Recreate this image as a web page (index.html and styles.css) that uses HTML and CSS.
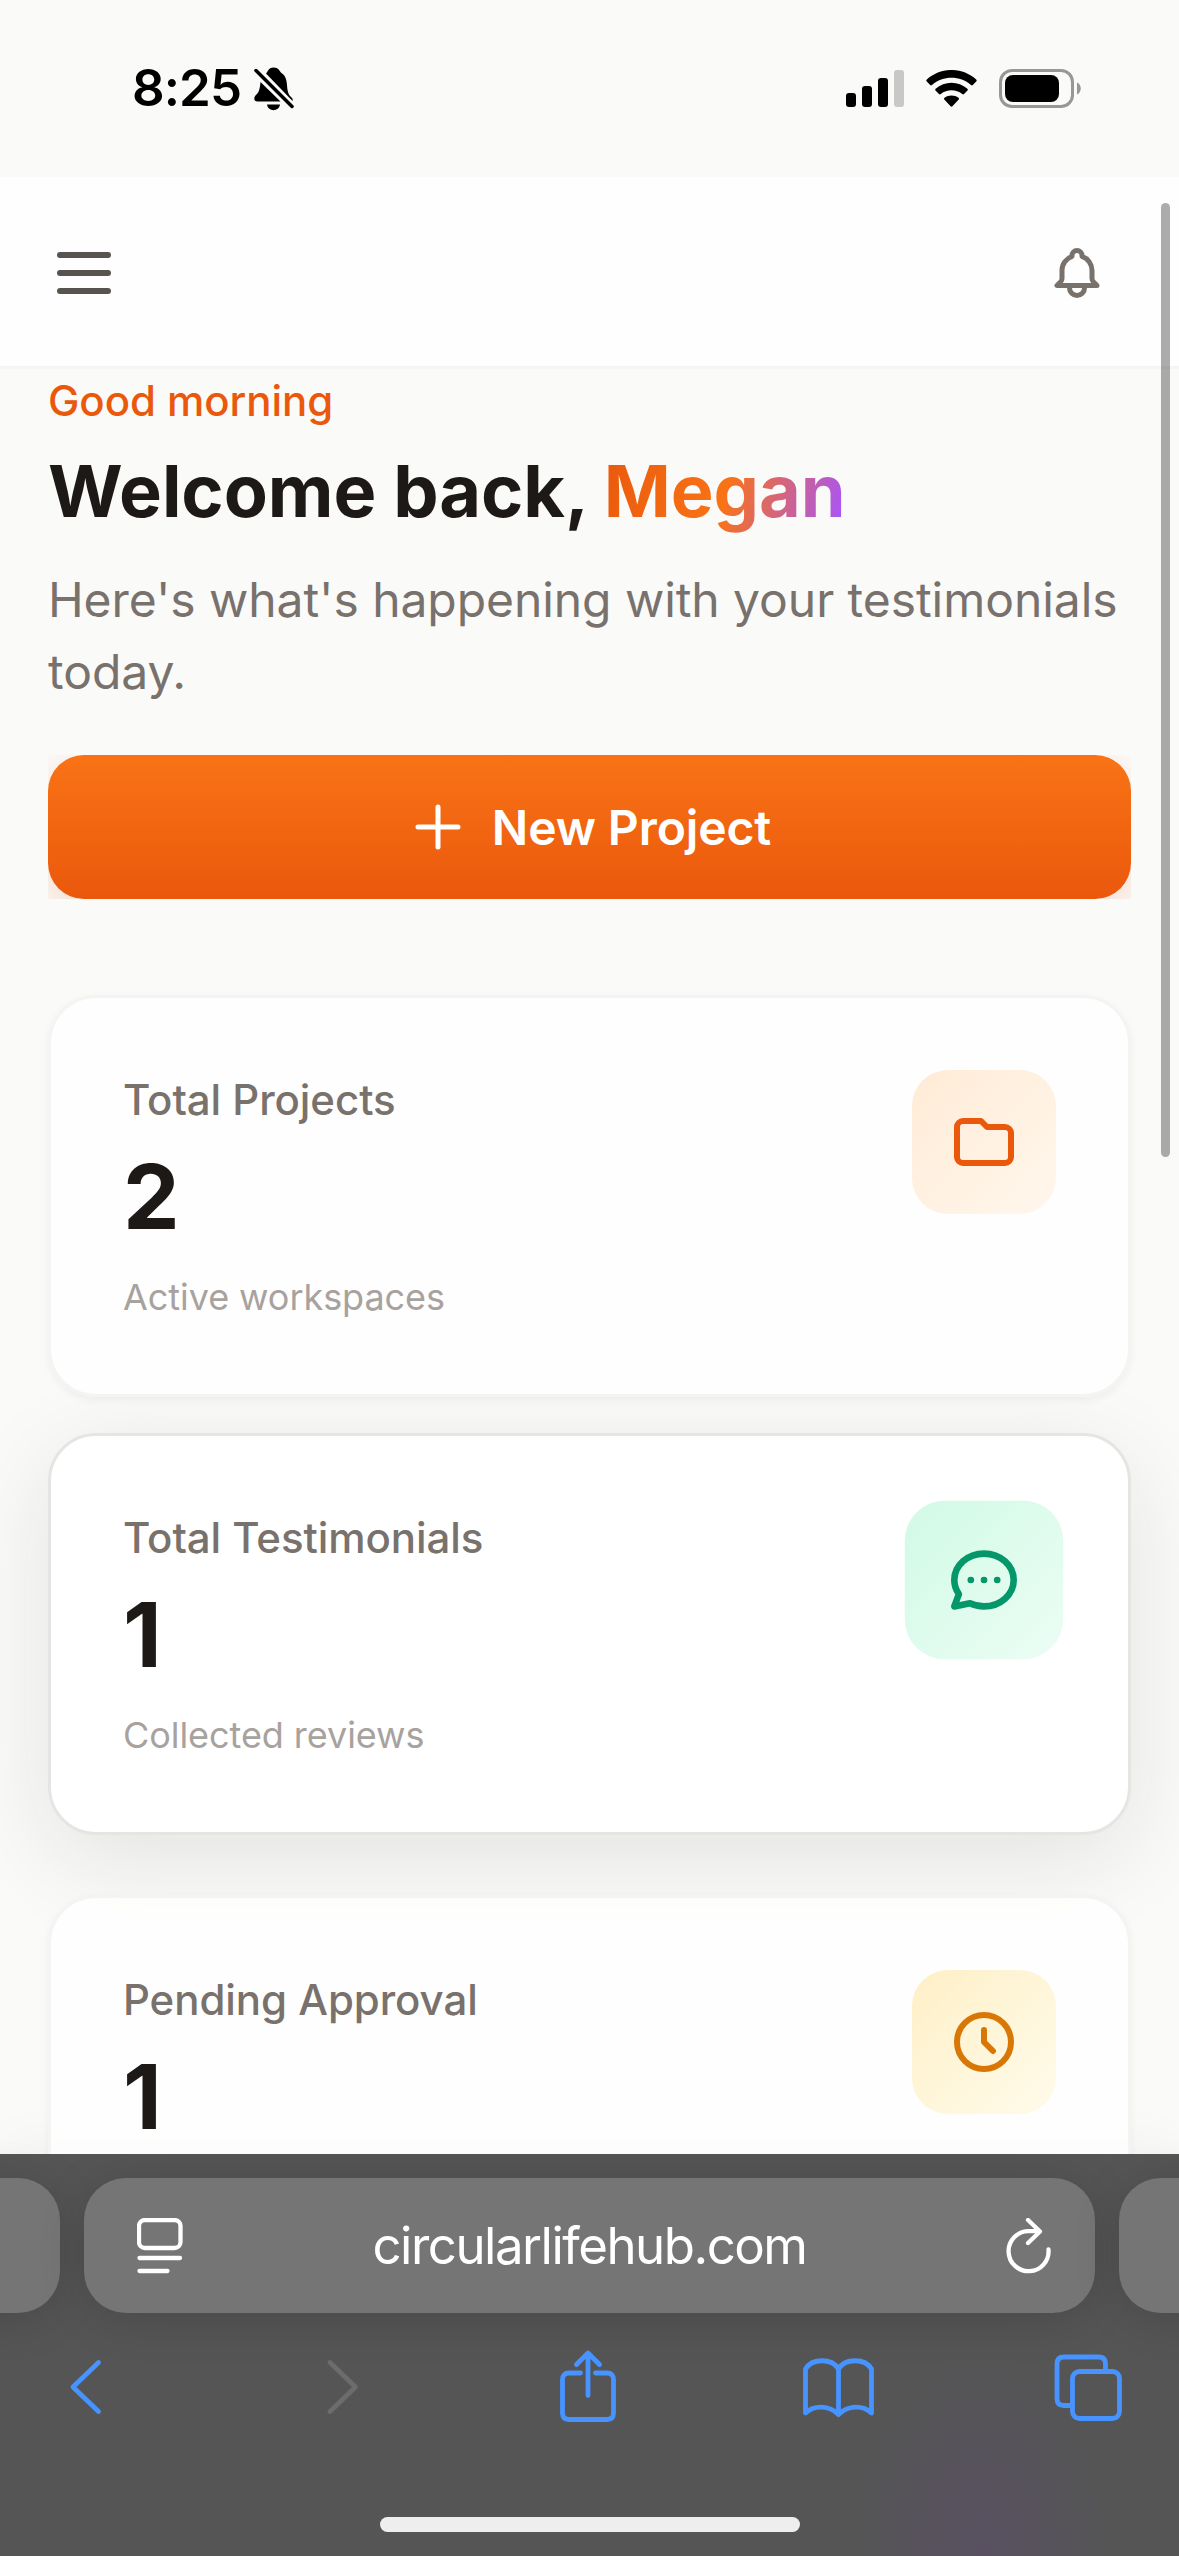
FILE: index.html
```
<!DOCTYPE html>
<html lang="en">
<head>
    <meta charset="UTF-8">
    <meta name="viewport" content="width=device-width, initial-scale=1.0">
    <title>Dashboard</title>
    <link rel="stylesheet" href="styles.css">
</head>
<body>
    <div class="screen">
        <!-- Status bar -->
        <div class="status-bar">
            <div class="status-left">
                <span class="time">8:25</span>
                <svg class="silent" viewBox="0 0 40 44">
                    <path d="M12 6.500C14 5 14 0.500 19.500 0.500C25 0.500 25 4 28 6.500C36 12 30.500 24 37 30C38.500 31.500 39 32 38.500 34Z"/>
                    <path d="M6.500 15L26.500 34.500H3.500C-0.500 34.500 -0.500 30.500 2 28C5.500 25 6 20 6.500 15Z"/>
                    <path d="M13 37.500H26C25 45 14 45 13 37.500Z"/>
                    <path class="slash" d="M2 3.500L38 39.500"/>
                </svg>
            </div>
            <div class="status-right">
                <svg class="signal" viewBox="0 0 58 38">
                    <rect x="0" y="23" width="10" height="14" rx="3"/>
                    <rect x="16" y="16" width="10" height="21" rx="3"/>
                    <rect x="32" y="8" width="10" height="29" rx="3"/>
                    <rect class="off" x="48" y="0" width="10" height="37" rx="3"/>
                </svg>
                <svg class="wifi" viewBox="0 0 51 38">
                    <path d="M0.800 11.500Q-0.200 10.500 0.800 9.500C15 -3.200 36 -3.200 50.200 9.500Q51.200 10.500 50.200 11.500L46.800 15Q46 15.800 45 15C34 5.400 17 5.400 6 15Q5 15.800 4.200 15Z"/>
                    <path d="M9.500 20.500Q8.700 19.600 9.600 18.700C18.500 10.700 32.500 10.700 41.400 18.700Q42.300 19.600 41.500 20.500L38 24Q37.200 24.800 36.200 24C30 19 21 19 14.800 24Q13.800 24.800 13 24Z"/>
                    <path d="M18.300 29.500Q17.500 28.600 18.500 27.700C22.500 24.700 28.500 24.700 32.500 27.700Q33.500 28.600 32.700 29.500L26.400 36.300Q25.500 37.200 24.600 36.300Z"/>
                </svg>
                <svg class="battery" viewBox="0 0 82 39">
                    <rect class="shell" x="1.500" y="1.500" width="72" height="36" rx="11.500"/>
                    <rect x="6" y="6" width="54" height="27" rx="8"/>
                    <path class="cap" d="M78 13.500C83 15.500 83 23.500 78 25.500Z"/>
                </svg>
            </div>
        </div>

        <!-- Header -->
        <header class="header">
            <svg class="menu-icon" viewBox="0 0 24 24"><path d="M4 6h16M4 12h16M4 18h16"/></svg>
            <svg class="bell-icon" viewBox="0 0 24 24"><path d="M15 17h5l-1.405-1.405A2.032 2.032 0 0118 14.158V11a6.002 6.002 0 00-4-5.659V5a2 2 0 10-4 0v.341C7.670 6.165 6 8.388 6 11v3.159c0 .538-.214 1.055-.595 1.436L4 17h5m6 0v1a3 3 0 11-6 0v-1m6 0H9"/></svg>
        </header>

        <main class="content">
            <p class="greeting">Good morning</p>
            <h1>Welcome back, <span class="name">Megan</span></h1>
            <p class="intro">Here's what's happening with your testimonials today.</p>

            <div class="button-wrap">
                <button class="new-project">
                    <svg viewBox="0 0 24 24"><path d="M12 4v16m8-8H4"/></svg>
                    <span>New Project</span>
                </button>
            </div>

            <div class="cards">
                <div class="card">
                    <div>
                        <p class="label">Total Projects</p>
                        <p class="value">2</p>
                        <p class="note">Active workspaces</p>
                    </div>
                    <div class="icon orange">
                        <svg viewBox="0 0 24 24"><path d="M3 7v10a2 2 0 002 2h14a2 2 0 002-2V9a2 2 0 00-2-2h-6l-2-2H5a2 2 0 00-2 2z"/></svg>
                    </div>
                </div>
                <div class="card active">
                    <div>
                        <p class="label">Total Testimonials</p>
                        <p class="value">1</p>
                        <p class="note">Collected reviews</p>
                    </div>
                    <div class="icon green">
                        <svg viewBox="0 0 24 24"><path d="M8 12h.01M12 12h.01M16 12h.01M21 12c0 4.418-4.030 8-9 8a9.863 9.863 0 01-4.255-.949L3 20l1.395-3.720C3.512 15.042 3 13.574 3 12c0-4.418 4.030-8 9-8s9 3.582 9 8z"/></svg>
                    </div>
                </div>
                <div class="card">
                    <div>
                        <p class="label">Pending Approval</p>
                        <p class="value">1</p>
                    </div>
                    <div class="icon amber">
                        <svg viewBox="0 0 24 24"><path d="M12 8v4l3 3m6-3a9 9 0 11-18 0 9 9 0 0118 0z"/></svg>
                    </div>
                </div>
            </div>
        </main>

        <!-- Browser toolbar -->
        <footer class="toolbar">
            <div class="tabs">
                <div class="pill side"></div>
                <div class="pill address">
                    <svg class="reader" viewBox="0 0 46 56">
                        <rect x="2" y="2" width="41.500" height="28" rx="6"/>
                        <path d="M2.500 40H43M2.500 53H30.500"/>
                    </svg>
                    <span class="url">circularlifehub.com</span>
                    <svg class="reload" viewBox="0 0 46 56">
                        <path d="M42.500 31.500A20 20 0 1 1 22.500 13.200H33M22 2L34 13.500L22 25"/>
                    </svg>
                </div>
                <div class="pill side"></div>
            </div>
            <nav class="nav">
                <svg viewBox="0 0 72 76"><path d="M49.500 13.500L24 38L49.500 62.500"/></svg>
                <svg class="disabled" viewBox="0 0 72 76"><path d="M30 13.500L55.500 38L30 62.500"/></svg>
                <svg viewBox="0 0 72 76"><path d="M29.500 24H18Q11.500 24 11.500 30.500V64Q11.500 70.500 18 70.500H56Q62.500 70.500 62.500 64V30.500Q62.500 24 56 24H44.500M37 46.500V4.500M25.500 15.500L37 4L48.500 15.500"/></svg>
                <svg viewBox="0 0 72 76"><path d="M37.500 20C31 9 11 9 4.500 20V64C13 56 28 56 37.500 65.500C47 56 62 56 70.500 64V20C64 9 44 9 37.500 20V65"/></svg>
                <svg viewBox="0 0 72 76"><path d="M20 56.500H12Q5 56.500 5 49.500V15Q5 8 12 8H46.500Q53.500 8 53.500 15V22"/><rect x="20.500" y="22.500" width="47" height="47" rx="7"/></svg>
            </nav>
            <div class="home-indicator"></div>
        </footer>

        <div class="scrollbar"></div>
    </div>
</body>
</html>
```

FILE: styles.css
```
* {
    box-sizing: border-box;
    margin: 0;
    padding: 0;
}
body {
    font-family: Inter, "Liberation Sans", sans-serif;
    background-color: #fafaf9;
    color: #1c1917;
}
svg {
    display: block;
    fill: none;
    stroke: currentColor;
    stroke-width: 2;
    stroke-linecap: round;
    stroke-linejoin: round;
}
.screen {
    position: relative;
    width: 1179px;
    height: 2556px;
    display: flex;
    flex-direction: column;
    overflow: hidden;
}

/* status bar */
.status-bar {
    height: 177px;
    padding: 0 98px 0 132px;
    display: flex;
    justify-content: space-between;
    align-items: center;
    color: #000;
}
.status-bar svg {
    fill: #000;
    stroke: none;
}
.status-left, .status-right {
    display: flex;
    align-items: center;
}
.time {
    padding-bottom: 2px;
    font-size: 51px;
    line-height: 60px;
    font-weight: 600;
    letter-spacing: -0.9px;
    width: 122px;
}
.silent {
    width: 40px;
    height: 44px;
}
.status-bar .slash {
    stroke: #000;
    stroke-width: 3.5;
}
.status-right {
    gap: 22px;
}
.signal {
    width: 58px;
    height: 38px;
}
.signal .off {
    fill: #c8c8c7;
}
.wifi {
    width: 51px;
    height: 38px;
}
.battery {
    width: 82px;
    height: 39px;
}
.status-bar .shell {
    fill: none;
    stroke: #979796;
    stroke-width: 3;
}
.battery .cap {
    fill: #979796;
}

/* header */
.header {
    height: 192px;
    padding: 3px 72px 0 48px;
    display: flex;
    justify-content: space-between;
    align-items: center;
    background-color: #fefefe;
    border-bottom: 3px solid #f5f5f4;
}
.menu-icon {
    width: 72px;
    height: 72px;
    color: #57534e;
}
.bell-icon {
    width: 60px;
    height: 60px;
    color: #78716c;
}

/* content */
.content {
    height: 1785px;
    padding: 2px 48px 0;
    overflow: hidden;
    letter-spacing: -0.06px;
}
.greeting {
    font-size: 42px;
    line-height: 60px;
    font-weight: 500;
    color: #ea580c;
}
h1 {
    margin-top: 12px;
    font-size: 72px;
    line-height: 96px;
    font-weight: 700;
}
.name {
    background: linear-gradient(105deg, #ea580c 0%, #f97316 50%, #a855f7 97%);
    -webkit-background-clip: text;
    background-clip: text;
    color: transparent;
}
.intro {
    margin-top: 25px;
    font-size: 48px;
    line-height: 72px;
    color: #78716c;
}
.button-wrap {
    margin-top: 47px;
    height: 144px;
    overflow: hidden;
}
.new-project {
    width: 100%;
    height: 144px;
    display: flex;
    justify-content: center;
    align-items: center;
    gap: 24px;
    border: none;
    border-radius: 36px;
    background: linear-gradient(180deg, #f97316, #ea580c);
    box-shadow: 0 12px 42px rgba(234, 88, 12, 0.2);
    color: #fff;
    font-family: inherit;
    font-size: 48px;
    font-weight: 600;
    letter-spacing: -0.1px;
}
.new-project svg {
    width: 60px;
    height: 60px;
}

/* cards */
.cards {
    margin-top: 96px;
    display: flex;
    flex-direction: column;
    gap: 48px;
}
.card {
    position: relative;
    z-index: 1;
    height: 402px;
    padding: 72px;
    display: flex;
    flex-shrink: 0;
    justify-content: space-between;
    align-items: flex-start;
    background-color: rgba(255, 255, 255, 0.8);
    background-clip: padding-box;
    border: 3px solid #f4f4f3;
    border-radius: 48px;
    box-shadow: 0 3px 9px rgba(0, 0, 0, 0.05);
}
.card.active {
    z-index: 0;
    transform: translateY(-12px);
    background-color: #fff;
    border-color: #e5e5e4;
    box-shadow: 0 24px 96px rgba(28, 25, 23, 0.1);
}
.label {
    font-size: 42px;
    line-height: 60px;
    font-weight: 500;
    color: #78716c;
}
.value {
    margin-top: 13px;
    font-size: 90px;
    line-height: 108px;
    font-weight: 700;
}
.note {
    margin-top: 22px;
    font-size: 36px;
    line-height: 48px;
    color: #a8a29e;
}
.icon {
    width: 144px;
    height: 144px;
    display: flex;
    justify-content: center;
    align-items: center;
    border-radius: 36px;
}
.icon svg {
    width: 72px;
    height: 72px;
}
.active .icon {
    transform: scale(1.1);
}
.orange {
    background: linear-gradient(135deg, #ffebd6, #fff7ed);
    color: #ea580c;
}
.green {
    background: linear-gradient(135deg, #d1fae5, #ecfdf5);
    color: #059669;
}
.amber {
    background: linear-gradient(135deg, #fef0c7, #fffbeb);
    color: #d97706;
}

/* browser toolbar */
.toolbar {
    position: relative;
    height: 402px;
    padding-top: 24px;
    background: radial-gradient(ellipse 130px 200px at 980px 402px, #595162, transparent), #555;
    box-shadow: 0 0 60px rgba(0, 0, 0, 0.05);
}
.tabs {
    display: flex;
    justify-content: center;
    gap: 24px;
}
.pill {
    height: 135px;
    flex-shrink: 0;
    border-radius: 42px;
    background-color: #757575;
    box-shadow: 0 6px 48px rgba(0, 0, 0, 0.14);
}
.side {
    width: 300px;
}
.address {
    width: 1011px;
    padding: 0 43px 0 53px;
    display: flex;
    justify-content: space-between;
    align-items: center;
    color: #fff;
    font-size: 51px;
}
.url {
    margin-right: 10px;
    letter-spacing: -1.5px;
}
.address svg {
    width: 46px;
    height: 56px;
    stroke-width: 4.3;
}
.nav {
    margin-top: 36px;
    padding: 0 55px 0 49px;
    display: flex;
    justify-content: space-between;
    color: #4793ff;
}
.nav svg {
    width: 72px;
    height: 76px;
    stroke-width: 4.8;
    overflow: visible;
}
.nav .disabled {
    color: #6c6c6c;
}
.home-indicator {
    width: 420px;
    height: 15px;
    margin: 92px auto 0;
    border-radius: 8px;
    background-color: #eee;
}

/* page scroll indicator */
.scrollbar {
    position: absolute;
    top: 203px;
    right: 9px;
    width: 9px;
    height: 954px;
    border-radius: 5px;
    background-color: rgba(0, 0, 0, 0.32);
}
```
